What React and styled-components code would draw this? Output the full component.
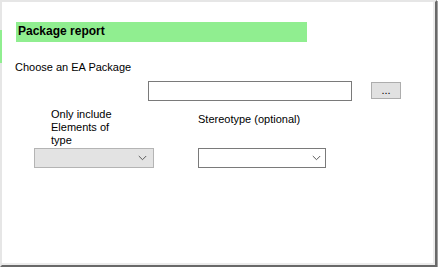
import React from "react";
import styled, { createGlobalStyle } from "styled-components";

const Global = createGlobalStyle`
  html, body { margin: 0; padding: 0; background: #ffffff; }
  body { font-family: "Liberation Sans", Arial, sans-serif; }
  * { box-sizing: border-box; }
`;

const Frame = styled.div`
  position: relative;
  width: 437px;
  height: 267px;
  background: #ffffff;
  border-top: 2px solid #e6e6e6;
  border-left: 2px solid #e6e6e6;
  border-right: 2px solid #696969;
  border-bottom: 2px solid #696969;
  box-shadow: 1px 1px 0 #a0a0a0, inset -2px -2px 0 #ececec;
  display: flex;
  flex-direction: column;
  align-items: flex-start;
  font-family: "Liberation Sans", Arial, sans-serif;
  font-size: 11px;
  color: #000;
`;

const AccentStrip = styled.div`
  position: absolute;
  left: -2px;
  top: 28px;
  width: 2px;
  height: 33px;
  background: #90ee90;
`;

const Header = styled.div`
  margin: 20px 0 0 14px;
  width: 291px;
  height: 20px;
  background: #90ee90;
  padding-left: 2px;
  font-size: 12px;
  font-weight: bold;
  line-height: 18px;
  color: #000;
`;

const Label = styled.div`
  font-size: 11px;
  line-height: 13px;
  color: #000;
  margin-top: ${(p) => p.$top || 0}px;
  margin-left: ${(p) => p.$left || 0}px;
  width: ${(p) => (p.$width ? `${p.$width}px` : "auto")};
`;

const InputRow = styled.div`
  display: flex;
  align-items: flex-start;
  margin-top: 7px;
  padding-left: 146px;
`;

const TextBox = styled.div`
  width: 204px;
  height: 20px;
  border: 1px solid #7a7a7a;
  background: #ffffff;
`;

const BrowseButton = styled.div`
  margin: 1px 0 0 19px;
  width: 30px;
  height: 17px;
  border: 1px solid #adadad;
  background: #e1e1e1;
  display: flex;
  justify-content: center;
  font-size: 11px;
  line-height: 15px;
  color: #000;
`;

const OptionsGrid = styled.div`
  display: grid;
  grid-template-columns: 120px 128px;
  column-gap: 44px;
  align-items: start;
  margin-top: 7px;
  padding-left: 32px;
`;

const Combo = styled.div`
  margin-top: 1px;
  height: 20px;
  border: 1px solid ${(p) => (p.$disabled ? "#b4b4b4" : "#7a7a7a")};
  background: ${(p) => (p.$disabled ? "#e3e3e3" : "#ffffff")};
  display: flex;
  align-items: center;
  justify-content: flex-end;
  padding-right: ${(p) => (p.$disabled ? 6 : 4)}px;
`;

const Chevron = () => (
  <svg width="9" height="6" viewBox="0 0 9 6">
    <path d="M0.8 1 L4.5 4.7 L8.2 1" fill="none" stroke="#5a5a5a" strokeWidth="1" />
  </svg>
);

export default function App() {
  return (
    <>
      <Global />
      <Frame>
        <AccentStrip />
        <Header>Package report</Header>
        <Label $top={19} $left={13}>Choose an EA Package</Label>
        <InputRow>
          <TextBox />
          <BrowseButton>...</BrowseButton>
        </InputRow>
        <OptionsGrid>
          <Label $left={17} $width={76}>Only include Elements of type</Label>
          <Label $top={5}>Stereotype (optional)</Label>
          <Combo $disabled>
            <Chevron />
          </Combo>
          <Combo>
            <Chevron />
          </Combo>
        </OptionsGrid>
      </Frame>
    </>
  );
}
